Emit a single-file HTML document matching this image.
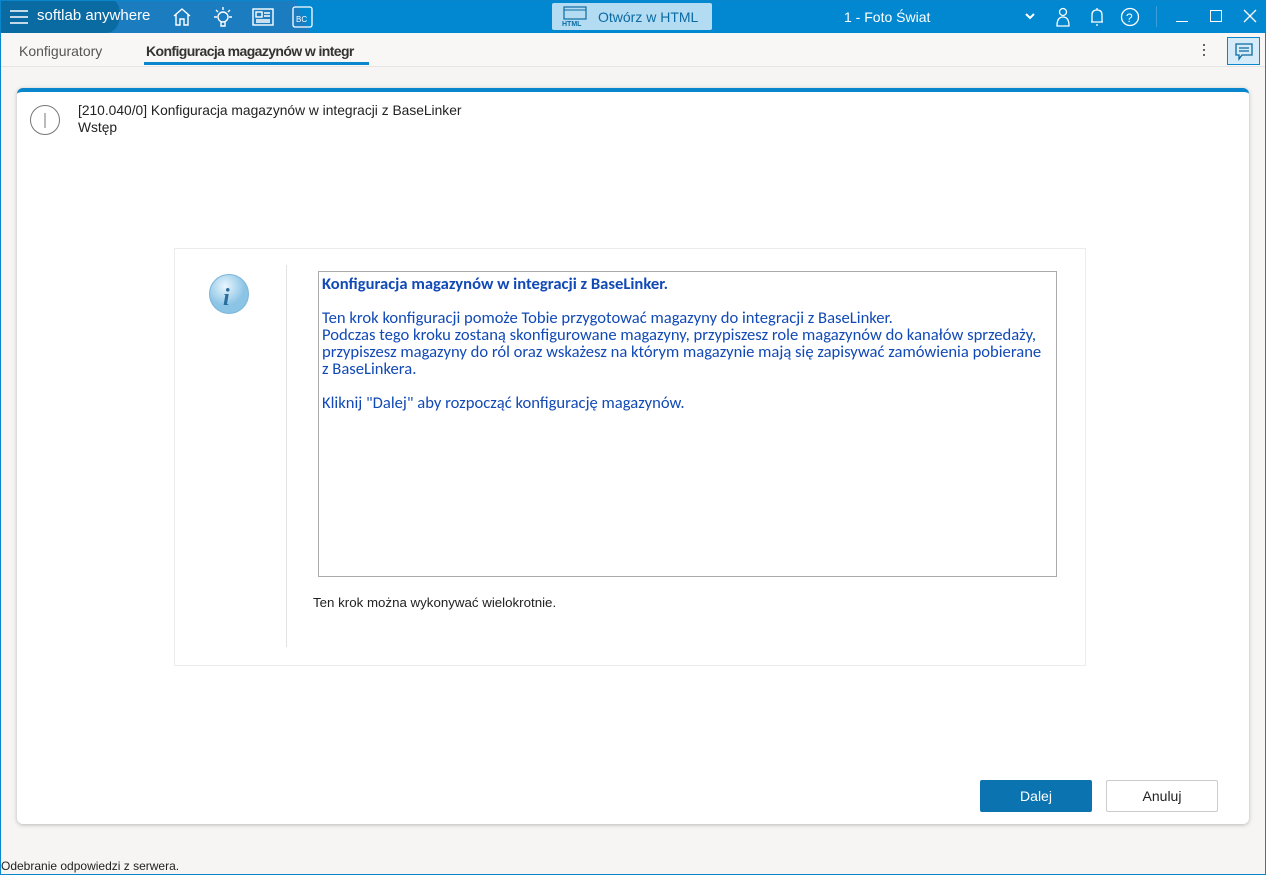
<!DOCTYPE html>
<html><head><meta charset="utf-8"><style>
*{box-sizing:border-box;margin:0;padding:0}
body{width:1266px;height:875px;overflow:hidden;background:#f6f5f3;font-family:"Liberation Sans",sans-serif;position:relative}
.frame{position:absolute;left:0;top:0;width:1266px;height:875px;border:1px solid #0a86cc;pointer-events:none;z-index:5}
.top{position:absolute;left:0;top:0;width:1266px;height:33px;background:#0288d1}
.ab{position:absolute;color:#fff}
.tabs{position:absolute;left:1px;top:33px;width:1264px;height:34px;background:#f8f7f5;border-bottom:1px solid #e4e4e4}
.card{position:absolute;left:17px;top:88px;width:1232px;height:736px;background:#fff;border-radius:6px;box-shadow:0 1px 4px rgba(0,0,0,.25);border-top:4px solid #0a86cc}
.blue{color:#1149b5;font-family:"Carlito","Liberation Sans",sans-serif;font-size:16.6px;line-height:17px}
</style></head><body>
<div class="frame"></div>
<div class="top">
<svg width="420" height="33" style="position:absolute;left:0;top:0">
<polygon points="0,0 295,0 310,33 0,33" fill="#1b7cc0"/>
<path d="M0 0H110Q120 0 120 16Q118 33 105 33H0Z" fill="#0a6aa2"/>
</svg>
<svg width="20" height="14" style="position:absolute;left:10px;top:10px"><path d="M0 1H18M0 7H18M0 13H18" stroke="#fff" stroke-width="1.6"/></svg>
<div class="ab" style="left:37px;top:7px;font-size:15px">softlab anywhere</div>
<svg width="20" height="20" style="position:absolute;left:172px;top:7px" fill="none" stroke="#fff" stroke-width="1.4"><path d="M2 9L10 2L18 9M4 7V18H8V12H12V18H16V7"/></svg>
<svg width="24" height="24" style="position:absolute;left:211px;top:5px" fill="none" stroke="#fff" stroke-width="1.4"><circle cx="12" cy="12" r="5"/><path d="M10 17v4h4v-4M12 2v3M3 12h3M18 12h3M5 5l2 2M19 5l-2 2"/></svg>
<svg width="22" height="18" style="position:absolute;left:252px;top:8px" fill="none" stroke="#fff" stroke-width="1.4"><rect x="1" y="1" width="20" height="16"/><rect x="4" y="4" width="6" height="5"/><path d="M12 5h6M12 8h6M4 12h14M4 14h14"/></svg>
<svg width="22" height="22" style="position:absolute;left:292px;top:6px"><rect x="1" y="1" width="19" height="20" rx="2" fill="none" stroke="#fff" stroke-width="1.3"/><text x="4" y="16" font-size="8" fill="#fff" font-family="Liberation Sans">BC</text></svg>
<div style="position:absolute;left:552px;top:3px;width:160px;height:27px;background:#b3dcf3;border-radius:2px"></div>
<svg width="28" height="22" style="position:absolute;left:561px;top:6px"><rect x="3" y="1" width="22" height="12" fill="none" stroke="#0a6aa2" stroke-width="1.2"/><path d="M3 4H25" stroke="#0a6aa2"/><text x="1" y="20" font-size="7" font-weight="bold" fill="#0a6aa2" font-family="Liberation Sans">HTML</text></svg>
<div style="position:absolute;left:598px;top:9px;font-size:14px;color:#0a6aa2">Otwórz w HTML</div>
<div class="ab" style="left:844px;top:9px;font-size:14px">1 - Foto Świat</div>
<svg width="10" height="8" style="position:absolute;left:1025px;top:13px"><path d="M1 1L5 5L9 1" stroke="#fff" stroke-width="2" fill="none"/></svg>
<svg width="16" height="20" style="position:absolute;left:1055px;top:7px" fill="none" stroke="#fff" stroke-width="1.3"><circle cx="8" cy="5" r="3.5"/><path d="M2 19Q2 10 8 10Q14 10 14 19Z"/></svg>
<svg width="16" height="20" style="position:absolute;left:1089px;top:7px" fill="none" stroke="#fff" stroke-width="1.3"><path d="M3 15V8Q3 3 8 3Q13 3 13 8V15H2H14M8 1V3M7 18h2"/></svg>
<svg width="20" height="20" style="position:absolute;left:1120px;top:7px"><circle cx="10" cy="10" r="8.5" fill="none" stroke="#fff" stroke-width="1.3"/><text x="6" y="15" font-size="12" fill="#fff" font-family="Liberation Sans">?</text></svg>
<div style="position:absolute;left:1156px;top:6px;width:1px;height:21px;background:#3aa0dc"></div>
<div style="position:absolute;left:1176px;top:21px;width:12px;height:1px;background:#fff"></div>
<div style="position:absolute;left:1210px;top:10px;width:12px;height:12px;border:1.3px solid #fff"></div>
<svg width="14" height="14" style="position:absolute;left:1243px;top:9px"><path d="M1 1L13 13M13 1L1 13" stroke="#fff" stroke-width="1.3"/></svg>
</div>
<div class="tabs">
<div style="position:absolute;left:18px;top:10px;font-size:14px;color:#555">Konfiguratory</div>
<div style="position:absolute;left:145px;top:10px;font-size:14px;font-weight:bold;color:#333;width:212px;overflow:hidden;white-space:nowrap;letter-spacing:-.6px">Konfiguracja magazynów w integr</div>
<div style="position:absolute;left:143px;top:29px;width:225px;height:3px;background:#0a86cc"></div>
<div style="position:absolute;left:1202px;top:11px;width:2px;height:13px;background:repeating-linear-gradient(#666 0 2px,transparent 2px 5px)"></div>
<div style="position:absolute;left:1226px;top:4px;width:33px;height:28px;background:#d6ebf8;border:1px solid #0a86cc"></div>
<svg width="18" height="18" style="position:absolute;left:1234px;top:10px" fill="none" stroke="#0a6aa2" stroke-width="1.3"><path d="M1 1H17V12H7L4 16V12H1Z"/><path d="M4 5H14M4 8H14"/></svg>
</div>
<div class="card">
<svg width="32" height="32" style="position:absolute;left:12px;top:12px"><circle cx="16" cy="16" r="14.5" fill="none" stroke="#777" stroke-width="1"/><path d="M16 9V24" stroke="#777"/></svg>
<div style="position:absolute;left:61px;top:10px;font-size:13.8px;color:#222;line-height:17px">[210.040/0] Konfiguracja magazynów w integracji z BaseLinker<br>Wstęp</div>
<div style="position:absolute;left:157px;top:156px;width:912px;height:418px;border:1px solid #ececec">
<div style="position:absolute;left:111px;top:16px;width:1px;height:382px;background:#e2e2e2"></div>
<svg width="42" height="42" style="position:absolute;left:33px;top:24px"><defs><radialGradient id="g" cx=".4" cy=".3"><stop offset="0" stop-color="#eaf6fd"/><stop offset="1" stop-color="#8cc4e6"/></radialGradient></defs><circle cx="21" cy="21" r="19.5" fill="url(#g)" stroke="#7ab6da"/><text x="15" y="32" font-size="24" font-weight="bold" font-style="italic" fill="#2b6e9e" font-family="Liberation Serif">i</text></svg>
<div style="position:absolute;left:143px;top:22px;width:739px;height:306px;border:1px solid #aaa;padding:4px 3px" class="blue">
<b>Konfiguracja magazynów w integracji z BaseLinker.</b><br><br>
Ten krok konfiguracji pomoże Tobie przygotować magazyny do integracji z BaseLinker.<br>
Podczas tego kroku zostaną skonfigurowane magazyny, przypiszesz role magazynów do kanałów sprzedaży,<br>
przypiszesz magazyny do ról oraz wskażesz na którym magazynie mają się zapisywać zamówienia pobierane<br>
z BaseLinkera.<br><br>
Kliknij "Dalej" aby rozpocząć konfigurację magazynów.
</div>
<div style="position:absolute;left:138px;top:346px;font-size:13.3px;color:#222">Ten krok można wykonywać wielokrotnie.</div>
</div>
<div style="position:absolute;left:963px;top:688px;width:112px;height:32px;background:#0a73b0;border-radius:2px;color:#fff;font-size:14px;text-align:center;line-height:32px">Dalej</div>
<div style="position:absolute;left:1089px;top:688px;width:112px;height:32px;background:#fff;border:1px solid #ccc;border-radius:2px;color:#222;font-size:14px;text-align:center;line-height:30px">Anuluj</div>
</div>
<div style="position:absolute;left:1px;top:859px;font-size:12px;color:#222">Odebranie odpowiedzi z serwera.</div>
</body></html>
